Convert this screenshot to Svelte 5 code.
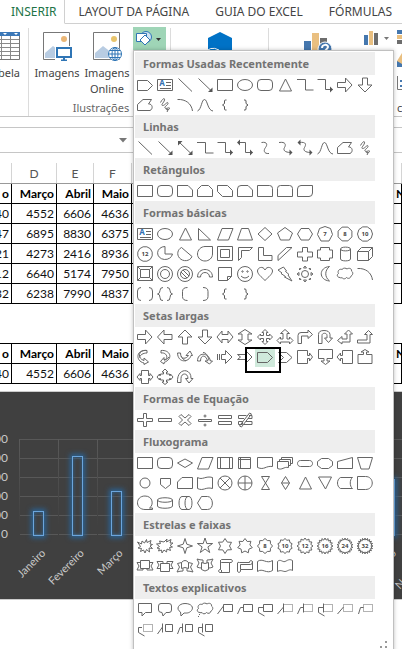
<script lang="ts">
  type Icon = { d: string; dash?: string; fill?: string; text?: string; thick?: boolean };

  const ell = (cx: number, cy: number, rx: number, ry = rx) =>
    `M${cx - rx} ${cy}a${rx} ${ry} 0 1 0 ${rx * 2} 0a${rx} ${ry} 0 1 0 ${-rx * 2} 0z`;

  function star(n: number, outer: number, inner: number) {
    const pts: string[] = [];
    for (let i = 0; i < n * 2; i++) {
      const r = i % 2 ? inner : outer;
      const a = (Math.PI * i) / n - Math.PI / 2;
      pts.push(`${(10 + r * Math.cos(a)).toFixed(1)} ${(10 + r * Math.sin(a)).toFixed(1)}`);
    }
    return `M${pts.join('L')}z`;
  }

  function polygon(n: number, r = 7.5) {
    const pts: string[] = [];
    for (let i = 0; i < n; i++) {
      const a = (Math.PI * (2 * i + 1)) / n - Math.PI / 2;
      pts.push(`${(10 + r * Math.cos(a)).toFixed(1)} ${(10 + r * Math.sin(a)).toFixed(1)}`);
    }
    return `M${pts.join('L')}z`;
  }

  const cloud =
    'M5 13.5c-3 0-3.5-3-1.5-4C2 6.5 5 4.5 7 5.5 8.500 3.500 11 4 12 5c2-1.500 5-.5 4.500 2 2 1.500 1.500 4-.5 5-.5 2.500-3 3-4.500 1.500-1.500 2-4 1.500-4.500 0-.5.5-1.500.5-2 0z';

  const icons: Record<string, Icon> = {
    // lines
    line: { d: 'M3.5 3.5l13.5 13' },
    arrowLine: { d: 'M3.5 3.5l13.5 13', fill: 'M17.5 17v-4.5l-4.5 4.5z' },
    doubleLine: { d: 'M3.5 3.5l13.5 13', fill: 'M17.5 17v-4.5l-4.5 4.5zM3 3v4.5l4.5-4.5z' },
    elbow: { d: 'M2 4.5h8.5v10.5h8' },
    elbowArrow: { d: 'M2.5 4.5h8v10h7', fill: 'M18 14.5l-3-3v6z' },
    elbowDouble: { d: 'M3 4.5h7.5v10h7', fill: 'M18 14.5l-3-3v6zM2 4.5l3-3v6z' },
    curved: { d: 'M6.5 4.5c6-1 6 2.5 4 5s-2 6.500 3.500 6' },
    curvedArrow: { d: 'M4 4.5c7-1 7 2.5 5.5 5s0 5 6.5 5', fill: 'M17.5 14.5l-3-3v6z' },
    curvedDouble: { d: 'M4 4.5c8-1 7 2.5 5.5 5s0 5 6.5 5', fill: 'M17.5 14.5l-3-3v6zM2.5 4.5l3-3v6z' },
    curve: { d: 'M2.5 16c4-1.5 4-11.5 7-11.5s3 11 8.5 11.5' },
    freeform: { d: 'M2.5 15.5v-6l5.5-5h8.5l-3 4.5c4-.5 5 5 1.5 6.5z' },
    scribble: { d: 'M5.5 7.5c2-4 4.5-5 4-2.5s-4 5-2 5.5 5-4.5 5.5-2.5-4 3.5-3 5 5-1.5 4.5.5-4 1.5-3 .5 2 1 .5 3' },
    arc: { d: 'M2.5 4.5c8-.5 14 4 15 11.5' },

    // rectangles
    rect: { d: 'M2.5 4.5h15v11h-15z' },
    roundRect: { d: 'M6 4.5h8a3.5 3.5 0 0 1 3.5 3.5v4a3.5 3.5 0 0 1-3.5 3.5h-8a3.5 3.5 0 0 1-3.5-3.5v-4a3.5 3.5 0 0 1 3.5-3.5z' },
    snip1: { d: 'M2.5 4.5h10.5l4.5 4.5v6.5h-15z' },
    snip2: { d: 'M6.5 4.5h7l4 4v7h-15v-7z' },
    snipDiag: { d: 'M2.5 4.5h10l5 5v6h-10l-5-5z' },
    snipRound: { d: 'M6 4.5h7l4.5 4.5v6.5h-15v-7.5q0-3.5 3.5-3.5z' },
    round1: { d: 'M2.5 4.5h12q3 0 3 3v8h-15z' },
    round2: { d: 'M5.5 4.5h9q3 0 3 3v8h-15v-8q0-3 3-3z' },
    roundDiag: { d: 'M6 4.5h11.5v7.5q0 3.5-3.5 3.5h-11.5v-7.5q0-3.5 3.5-3.5z' },

    // basic shapes
    textBox: { d: 'M2.5 4.5h15v11h-15zM11 7.5h5M11 10.5h5M5 13.5h11', text: 'A' },
    oval: { d: ell(10, 10, 7.5, 5.5) },
    triangle: { d: 'M10.5 4l6 12h-12z' },
    rightTriangle: { d: 'M3.5 4.5v11.5h12z' },
    parallelogram: { d: 'M7 4.5h11l-4.5 11.5h-11z' },
    trapezoid: { d: 'M6.5 4.5h7l4 11.5h-15z' },
    diamond: { d: 'M10 3.5l7 6.5-7 6.5-7-6.5z' },
    pentagon: { d: 'M10 3.5l7.5 5.5-3 7h-9l-3-7z' },
    hexagon: { d: 'M6 4.5h8l3.5 5.5-3.5 6h-8l-3.5-6z' },
    heptagon: { d: 'M10 2.5l5.5 2 2 6-3.5 6.5h-8l-3.5-6.5 2-6z', text: '7' },
    octagon: { d: polygon(8), text: '8' },
    decagon: { d: polygon(10), text: '10' },
    dodecagon: { d: polygon(12), text: '12' },
    pie: { d: 'M10 2.5v7.5h7.5a7.500 6.500 0 1 1-7.5-7.5z' },
    chord: { d: 'M6.5 3.5l10.5 9c-2 5-9 5.5-12.5 1.5-3-3.5-2-8.5 2-10.5z' },
    teardrop: { d: 'M17.5 2.5v7.5c0 4-3.5 7-7.5 7s-7.5-3-7.5-7 3.5-7.5 7.5-7.5z' },
    frame: { d: 'M2.5 2.5h15v14h-15zM5.5 5.5h9v8h-9z' },
    halfFrame: { d: 'M3.5 3.5h14l-3 3h-8v7l-3 3z' },
    lShape: { d: 'M3.5 3.5h5v8h8.5v5h-13.5z' },
    stripe: { d: 'M11.5 3.5h5.5l-14 13v-5z' },
    cross: { d: 'M7.5 3.5h5v4.5h5v5h-5v4h-5v-4h-5v-5h5z' },
    plaque: { d: 'M5.5 3.5h9v2.5h3v8h-3v2.5h-9v-2.5h-3v-8h3z' },
    can: { d: 'M5.5 5v10c0 2.5 10 2.5 10 0v-10c0-2.5-10-2.5-10 0zc0 2.5 10 2.5 10 0' },
    cube: { d: 'M2.5 7.5l4-4h11v9l-4 4h-11zh11l4-4M13.5 7.5v9' },
    bevel: { d: 'M2.5 2.5h15v14h-15zM5.5 5.5h9v8h-9zM2.5 2.5l3 3M17.5 2.5l-3 3M2.5 16.5l3-3M17.5 16.5l-3-3' },
    donut: { d: ell(10, 10, 7.5) + ell(10, 10, 4.5) },
    noSymbol: { d: ell(10, 10, 7.5) + ell(10, 10, 4.5) + 'M6 8l6 6M8 6l6 6' },
    blockArc: { d: 'M2.5 13c0-10 15-10 15 0h-3c0-6-9-6-9 0z' },
    folded: { d: 'M3.5 3.5h13v9l-4 4h-9zM16.5 12.5h-4v4' },
    smiley: { d: ell(10, 10, 7.5) + ell(7.5, 7.5, 0.7) + ell(12.5, 7.5, 0.7) + 'M6 12q4 4 8 0' },
    heart: { d: 'M10 6c2-4.5 7.5-2.5 7.5 1 0 3-4 6-7.5 9.5-3.5-3.5-7.5-6.5-7.5-9.5 0-3.5 5.5-5.5 7.5-1z' },
    bolt: { d: 'M3 6l5.5-3 3 4-1 .5 3.5 3-1 .5 4 6-7.5-4 1-.5-4.5-3 1-.5z' },
    sun: { d: ell(10, 10, 3.5) + 'M10 2l1.5 2h-3zM10 18l1.5-2h-3zM2 10l2-1.5v3zM18 10l-2-1.5v3zM4.5 4.5l1.500 0-1.500 1.500zM15.5 4.5h-1.5l1.5 1.5zM4.5 15.5h1.5l-1.5-1.5zM15.5 15.5h-1.5l1.5-1.5z' },
    moon: { d: 'M14.5 2.5c-11 1-11 13.5 0 14.5-5-4-5-10.5 0-14.5z' },
    cloud: { d: cloud },
    brackets: { d: 'M6 3.5q-3.5 0-3.5 3.5v6q0 3.5 3.5 3.5M14 3.5q3.5 0 3.5 3.5v6q0 3.5-3.5 3.5' },
    braces: { d: 'M8 3.5q-3 0-3 3t-2.5 3.5q2.5 0 2.5 3.5t3 3M12 3.5q3 0 3 3t2.5 3.5q-2.5 0-2.5 3.5t-3 3' },
    leftBracket: { d: 'M12.5 3.5q-5 0-5 4v5q0 4 5 4' },
    rightBracket: { d: 'M8 3.5q5 0 5 4v5q0 4-5 4' },
    leftBrace: { d: 'M11.5 5h-1q-1 0-1 1v2.500l-2 1.500 2 1.500v2.500q0 1 1 1h1', thick: true },
    rightBrace: { d: 'M9 5h1q1 0 1 1v2.500l2 1.500-2 1.500v2.500q0 1-1 1h-1', thick: true },

    // block arrows
    right: { d: 'M2.5 7.5h8v-4.5l6.5 7-6.5 7v-4.5h-8z' },
    left: { d: 'M17 7.5h-8v-4.5l-6.5 7 6.5 7v-4.5h8z' },
    up: { d: 'M7.5 17v-7h-4.5l7-7 7 7h-4.5v7z' },
    down: { d: 'M7.5 3v7h-4.5l7 7 7-7h-4.5v-7z' },
    leftRight: { d: 'M2 10l5-6v3.5h6v-3.5l5 6-5 6v-3.5h-6v3.5z' },
    upDown: { d: 'M10 2.5l7 4.5h-4v6h4l-7 4.5-7-4.5h4v-6h-4z' },
    quad: { d: 'M10 2.5l3 3h-1.5v3h3v-1.5l3 3-3 3v-1.5h-3v3h1.5l-3 3-3-3h1.5v-3h-3v1.5l-3-3 3-3v1.5h3v-3h-1.5z' },
    triple: { d: 'M10 2.5l4.5 4h-2.5v5.5h2.5v-2l3.5 3.5-3.5 3.5v-2h-9v2l-3.5-3.5 3.5-3.5v2h2.5v-5.5h-2.5z' },
    bent: { d: 'M3 16.5v-8q0-3 3-3h7v-2.5l4.5 4.5-4.5 4v-2.5h-6.5v7.5z' },
    uTurn: { d: 'M3.5 16.5v-9q0-4 5.5-4t6 4v3.5h2.5l-4 4.5-4-4.5h2.500v-2.500c0-3-5-3-5 0v8z' },
    leftUp: { d: 'M13.5 3l4 4h-2.5v8h-8v2l-4.5-3.5 4.5-4v2.5h5v-5h-2.5z' },
    bentUp: { d: 'M13.5 3.5l4 4h-2.5v8.5h-12.5v-3h9.5v-5.5h-2.5z' },
    curvedRight: { d: 'M12 3.5c-9-1-10 8-3 10v-2.5l4.500 4-4.500 2.500v-1.500c-9-2-8-14 3-12.500zM12 3.500v2.500c-4 0-7 2-7.500 4.500' },
    curvedLeft: { d: 'M6 3.5c9-1 13 8 3 12v1.5l-3.5-2.5 3.500-4v2.500c5-1 3-8-3-7zM14 10c-1.500 2-3 3-5 3' },
    curvedUp: { d: 'M2.5 6h3c0 7 6 6 8 2.5h-2.5l4-4.5 2.5 4.5h-1.5c-2 7-13 8-13.5-2.5zM6 9c1 2.5 3 4 5 5' },
    curvedDown: { d: 'M2.5 14h3c0-7 6-6 7 0h-2.5l4.5 3 3-3h-2c-2-9-13-9-13 0zM8 5.5c3 0 5 3 6 8' },
    striped: { d: 'M2.5 7v6M4.5 7v6M6.5 7.5h4v-4l6.5 6.5-6.5 6.5v-4h-4z' },
    notched: { d: 'M2.5 7.5h8v-4l6.5 6.5-6.5 6.5v-4h-8l3-2.5z' },
    homePlate: { d: 'M2.5 5.5h10l5 5-5 5h-10z' },
    chevron: { d: 'M3.5 5.5h8l5.5 5-5.5 5h-8l5-5z' },
    rightCallout: { d: 'M2.5 3.5h10v5h2v-2.5l3 4-3 4v-2.5h-2v5h-10z' },
    downCallout: { d: 'M3.5 2.5h14v9h-5.5v2.5h3l-4.5 3.5-4.5-3.5h3v-2.5h-5.5z' },
    leftCallout: { d: 'M17.5 3.5h-10v5h-2v-2.5l-3.5 4 3.5 4v-2.5h2v5h10z' },
    upCallout: { d: 'M3 16.5h14v-9h-5.5v-2.5h2.5l-4-2.5-4 2.5h2.5v2.5h-5.5z' },
    sideCallout: { d: 'M6.5 3.5h7v5h1.5v-2l3 3.5-3 3.5v-2h-1.5v5h-7v-5h-1.5v2l-3-3.5 3-3.5v2h1.5z' },
    quadCallout: { d: 'M10 2l3 3h-1.5v2h3v1.5h1v-1.500l2.500 3-2.500 3v-1.500h-1v1.500h-3v2h1.500l-3 2.500-3-2.500h1.500v-2h-3v-1.500h-1v1.500l-2.500-3 2.500-3v1.500h1v-1.500h3v-2h-1.500z' },
    circular: { d: 'M2.5 15.5c-1-15 14-15 13.5-4h2l-4 4.5-3.5-4.5h2.5c0-6-7-6-7 0v4z' },

    // equation shapes
    plus: { d: 'M8.5 3.5h3v5h6v3h-6v5h-3v-5h-6v-3h6z' },
    minus: { d: 'M3.5 8.5h13v3h-13z' },
    times: { d: 'M6 4.5l4 3.5 4-3.5 2 2-3.5 3.5 3.5 3.5-2 2-4-3.5-4 3.5-2-2 3.5-3.5-3.5-3.5z' },
    divide: { d: 'M3.5 9.5h13v2h-13z' + ell(10, 6, 1) + ell(10, 15, 1) },
    equal: { d: 'M3.5 5.5h13v3h-13zM3.5 11.5h13v3h-13z' },
    notEqual: { d: 'M3.5 5.5h8M14 5.5h3v3h-4M9 8.5h-5.5v-3M3.5 11.5h4v3h-4zM11 11.5h6v3h-8M14.5 3l2 1-10 13-2-1z' },

    // flowchart
    decision: { d: 'M10 6l7.5 4-7.5 4.5-7.5-4.5z' },
    predefined: { d: 'M2.5 4.5h15v11h-15zM5.5 4.5v11M14.5 4.5v11' },
    internal: { d: 'M3.5 4.5h12v11h-12zM5.5 4.5v11M3.5 6.5h12' },
    document: { d: 'M2.5 4.5h15v9c-7-1-8 4-15 1z' },
    documents: { d: 'M2.5 8.5h11v6c-5-1-6 3-11 1zM4.5 8.5v-2h11v6h-2M6.5 6.5v-2h11v6h-2' },
    terminator: { d: 'M5.5 7.5h9c4 0 4 6 0 6h-9c-4 0-4-6 0-6z' },
    preparation: { d: 'M6.5 5.5h7l4 3v4l-4 3h-7l-4-3v-4z' },
    manualInput: { d: 'M2.5 8.5l15-4v11h-15z' },
    manualOp: { d: 'M2.5 4.5h15l-3.5 11.5h-8z' },
    connector: { d: ell(10, 10, 5) },
    offPage: { d: 'M5.5 5.5h10v6l-5 4-5-4z' },
    card: { d: 'M7 4.5h10.5v11h-15v-6.5z' },
    tape: { d: 'M2.5 4.5c5 3 8-2 15 0v11c-7-2-9 3-15 0z' },
    summing: { d: ell(10, 10, 7) + 'M5 5l10 10M15 5l-10 10' },
    or: { d: ell(10, 10, 7) + 'M10 3v14M3 10h14' },
    collate: { d: 'M6.5 3.5h8l-8 13h8z' },
    sort: { d: 'M10.5 3.5l4 6.5-4 6.5-4-6.5zM6.5 10h8' },
    merge: { d: 'M3.5 4h13l-6 12z' },
    stored: { d: 'M5.5 4.5h12c-3 2-3 9 0 11h-12c-4-2-4-9 0-11z' },
    delay: { d: 'M2.5 3.5h8c9 0 9 13 0 13h-8z' },
    sequential: { d: 'M17.5 16.5h-7.5c-10 0-10-13.5 0-13.5 8 0 9 9 4.5 12h3z' },
    disk: { d: 'M2.5 7v6c0 3 15 3 15 0v-6c0-3-15-3-15 0zc0 3 15 3 15 0' },
    direct: { d: 'M7 3.5h7c4 0 4 13 0 13h-7c-4 0-4-13 0-13zM13 3.5c-4 0-4 13 0 13' },
    display: { d: 'M6.5 3.5h6c6 0 7 13 0 13h-6l-4-6.5z' },

    // stars and banners
    burst1: { d: 'M9.5 7l2-3.5.5 3 4-2-1 3.5 2.5.5-2.5 1.5 2.5 2.5-3.5-.5.5 4-3-2.5-1.5 3.5-1.5-3-3 1.5 1-3-3.5-.5 2.500-1.500-3-4.500 4 2 .5-3z' },
    burst2: { d: 'M9 6l3-3-.5 3 4.5-2.5-1 3.5 3 0-3 2.5 2.500 1.500-3 .5 1 3-3.500-1.500-.5 3-2.500-2-2 3-.5-3-3 1 1-2.500-2.500-.5 2.500-1.500-3-2.500 4-.5-1-2.500z' },
    star4: { d: star(4, 7.5, 2.5) },
    star5: { d: star(5, 8, 3) },
    star6: { d: star(6, 7.5, 4.5) },
    star7: { d: star(7, 7.5, 5) },
    star8: { d: star(8, 7.5, 6), text: '8' },
    star10: { d: star(10, 7.5, 6), text: '10' },
    star12: { d: star(12, 8, 6), text: '12' },
    star16: { d: star(16, 8, 6), text: '16' },
    star24: { d: star(18, 8, 6), text: '24' },
    star32: { d: star(20, 8, 6), text: '32' },
    ribbonUp: { d: 'M5.5 4.5h9v8h-9zM5.5 6.5h-3.5l2 3.5-2 4h6v-1.5M14.5 6.5h3.5l-2 3.5 2 4h-6v-1.5' },
    ribbonDown: { d: 'M5.5 7.5h9v8h-9zM8 7.5v-2h-6l2 3.5-2 3.5h3.5M12 7.5v-2h6l-2 3.5 2 3.5h-3.5' },
    bannerUp: { d: 'M6.5 12.5v-6q3.5-4 7 0v6q-3.5-2-7 0zM6.5 6.5l-4 1 2 3.5-2.5 5q3-1 6-1v-2.5M13.5 6.5l4 1-2 3.5 2.5 5q-3-1-6-1v-2.5' },
    bannerDown: { d: 'M6.5 6.5v7q3.5 3 7 0v-7q-3.5 2-7 0zM8 7v-3q-3 0-6-1l2 4-2 4q2 1 4.5 1M12 7v-3q3 0 6-1l-2 4 2 4q-2 1-4.5 1' },
    scrollV: { d: 'M6.5 3.5h10q2 1.5 0 3h-2v10h-10q-2-1.5 0-3h1v-8M6.5 3.5q-3 1.5 0 3h8M5.5 13.5q3 1.5 0 3' },
    scrollH: { d: 'M2.5 7v8.5q1.5 2 3 0v-2h12v-8q-1.5-2-3 0v1h-10q-2-1-2 1zM5.5 13.5v-5h10q2 0 2-3' },
    wave: { d: 'M2.5 5.5c5-4 9 3 15-1v10c-6 4-10-3-15 1z' },
    doubleWave: { d: 'M2.5 5.5c3-3 5 1 7.5 0s4-3 7.5-1v10c-3-2-5 1-7.5 1s-4-2-7.5 0z' },

    // callouts
    rectCallout: { d: 'M3.5 4.5h13v9h-6l-3.5 3.5v-3.5h-3.5z' },
    roundCallout: { d: 'M6 4.5h8q2.5 0 2.5 2.5v4q0 2.5-2.5 2.5h-3l-3 3.5-1-3.5q-3.5 0-3.5-2.5v-4q0-2.5 2.5-2.5z' },
    ovalCallout: { d: 'M6 17l-.5-4c-5-3-2-8.5 4.5-8.5s9 4 6.5 7-5 2.5-7.5 2.5z' },
    cloudCallout: { d: cloud + 'M4 15.5h1M3 17.5h1' },
    line1: { d: 'M8.5 5.5h9v7h-9zM8.5 7l-6 8' },
    line2: { d: 'M8.5 5.5h9v7h-9zM8.5 8.5h-3l-3 6.5' },
    line3: { d: 'M8.5 5.5h9v7h-9zM8.5 8.5h-5v5l6 3.5' },
    accent1: { d: 'M8.5 4.5v9M8.5 8l-6 7', dash: 'M8.5 5.5h9v7h-9z' },
    accent2: { d: 'M8.5 4.5v9M8.5 8.5h-3l-3 6.5', dash: 'M8.5 5.5h9v7h-9z' },
    accent3: { d: 'M8.5 4.5v9M8.5 8.5h-5v5l6 3.5', dash: 'M8.5 5.5h9v7h-9z' },
    plain1: { d: 'M8.5 8l-6 7', dash: 'M8.5 5.5h9v7h-9z' },
    plain2: { d: 'M8.5 8.5h-3l-2 6.5', dash: 'M8.5 5.5h9v7h-9z' },
    plain3: { d: 'M7 8.5h-3.5v5l6 3.5', dash: 'M8.5 5.5h9v7h-9z' },
    border1: { d: 'M10.5 5.5h7v7h-7zM7.5 4.5v9M7.5 8l-5 7' },
    border2: { d: 'M10.5 5.5h7v7h-7zM7.5 4.5v9M7.5 8.5h-2.5l-2.5 6.5' },
    border3: { d: 'M10.5 5.5h7v7h-7zM7.5 4.5v9M7.5 8.5h-4v5l6 3.5' }
  };

  const sections = [
    {
      title: 'Formas Usadas Recentemente',
      shapes: 'homePlate textBox line arrowLine rect oval roundRect triangle elbow elbowArrow right down freeform scribble arc curve leftBrace rightBrace'
    },
    {
      title: 'Linhas',
      shapes: 'line arrowLine doubleLine elbow elbowArrow elbowDouble curved curvedArrow curvedDouble curve freeform scribble'
    },
    { title: 'Retângulos', shapes: 'rect roundRect snip1 snip2 snipDiag snipRound round1 round2 roundDiag' },
    {
      title: 'Formas básicas',
      shapes:
        'textBox oval triangle rightTriangle parallelogram trapezoid diamond pentagon hexagon heptagon octagon decagon ' +
        'dodecagon pie chord teardrop frame halfFrame lShape stripe cross plaque can cube ' +
        'bevel donut noSymbol blockArc folded smiley heart bolt sun moon cloud arc ' +
        'brackets braces leftBracket rightBracket leftBrace rightBrace'
    },
    {
      title: 'Setas largas',
      selected: 'homePlate',
      shapes:
        'right left up down leftRight upDown quad triple bent uTurn leftUp bentUp ' +
        'curvedRight curvedLeft curvedUp curvedDown striped notched homePlate chevron rightCallout downCallout leftCallout upCallout ' +
        'sideCallout quadCallout circular'
    },
    { title: 'Formas de Equação', shapes: 'plus minus times divide equal notEqual' },
    {
      title: 'Fluxograma',
      shapes:
        'rect roundRect decision parallelogram predefined internal document documents terminator preparation manualInput manualOp ' +
        'connector offPage card tape summing or collate sort triangle merge stored delay ' +
        'sequential disk direct display'
    },
    {
      title: 'Estrelas e faixas',
      shapes:
        'burst1 burst2 star4 star5 star6 star7 star8 star10 star12 star16 star24 star32 ' +
        'ribbonUp ribbonDown bannerUp bannerDown scrollV scrollH wave doubleWave'
    },
    {
      title: 'Textos explicativos',
      shapes:
        'rectCallout roundCallout ovalCallout cloudCallout line1 line2 line3 accent1 accent2 accent3 plain1 plain2 ' +
        'plain3 border1 border2 border3'
    }
  ];

  const tabs = ['INSERIR', 'LAYOUT DA PÁGINA', 'GUIA DO EXCEL', 'FÓRMULAS'];

  const rows = [
    ['40', '4552', '6606', '4636'],
    ['47', '6895', '8830', '6375'],
    ['21', '4273', '2416', '8936'],
    ['12', '6640', '5174', '7950'],
    ['32', '6238', '7990', '4837']
  ];

  const ticks = ['00', '00', '00', '00', '00', '0'];
  const months = [
    { name: 'Janeiro', bar: 25 },
    { name: 'Fevereiro', bar: 80 },
    { name: 'Março', bar: 45 },
    { name: 'Abril', bar: 66 },
    { name: 'Maio', bar: 46 },
    { name: 'Junho', bar: 50 },
    { name: 'Julho', bar: 40 },
    { name: 'Agosto', bar: 60 },
    { name: 'Setembro', bar: 35 },
    { name: 'Outubro', bar: 57 },
    { name: 'Novembro', bar: 50 }
  ];
</script>

<div class="excel">
  <nav class="tabs">
    {#each tabs as tab, i}
      <button class="tab" class:active={i === 0}>{tab}</button>
    {/each}
  </nav>

  <div class="ribbon">
    <div class="group tables">
      <button class="big">
        <svg width="28" height="30" viewBox="0 0 28 30">
          <path d="M0 1.5h27.5v27H0" fill="#fff" stroke="#777" />
          <path d="M0 1h28v4H0z" fill="#3b78b8" />
          <path d="M11 2h4l-2 2zM22 2h4l-2 2z" fill="#fff" />
          <path d="M0 8.5h27M0 12.5h27M0 16.5h27M0 20.5h27M0 24.5h27M9.5 5v23M18.5 5v23" stroke="#8a8a8a" />
        </svg>
        <span>Tabela</span>
      </button>
    </div>

    <div class="group pictures">
      <div class="buttons">
        <button class="big">
          <svg width="30" height="30" viewBox="0 0 30 30">
            <path d="M1.5 1.5h26v27h-26z" fill="#fff" stroke="#777" />
            <circle cx="22" cy="8" r="3" fill="#eab676" />
            <path d="M3 27v-5l8-7 9 7v5z" fill="#b8cce2" />
            <path d="M13 15h17v15h-17z" fill="#fff" />
            <path d="M15 17h14v9h-14z" fill="#fff" stroke="#2f75b5" stroke-width="2" />
            <path d="M22 26v3M19 29.5h6" stroke="#2f75b5" stroke-width="2" />
          </svg>
          <span>Imagens</span>
        </button>
        <button class="big">
          <svg width="30" height="30" viewBox="0 0 30 30">
            <path d="M1.5 1.5h26v27h-26z" fill="#fff" stroke="#777" />
            <circle cx="22" cy="8" r="3" fill="#e8c46c" />
            <path d="M3 27v-5l8-7 9 7v5z" fill="#b8cce2" />
            <circle cx="23" cy="23" r="7" fill="#fff" />
            <path d={ell(23, 23, 6.5) + ell(23, 23, 3, 6.5) + 'M16.5 23h13M23 16.5v13M18 19.5h10M18 26.5h10'} fill="none" stroke="#2f75b5" />
          </svg>
          <span>Imagens Online</span>
        </button>
        <button class="shapes-button" aria-label="Formas">
          <svg width="32" height="22" viewBox="0 0 32 22">
            <circle cx="13" cy="9" r="5.5" fill="#cfe3f3" stroke="#2f75b5" />
            <path d="M3.5 5.5h10v8h-10z" fill="#fff" stroke="#2f75b5" />
            <path d="M12 7l5 5-5 5-5-5z" fill="#fff" stroke="#2f75b5" />
            <path d="M23 10h5l-2.5 3z" fill="#333" />
          </svg>
        </button>
      </div>
      <span class="caption">Ilustrações</span>
    </div>

    <div class="group apps">
      <svg width="28" height="28" viewBox="0 0 28 28">
        <path d="M14 4l12 6v13l-12 6-12-6v-13z" fill="#0072c6" />
        <path d="M-2 26q6-9 15-4l4 6z" fill="#0072c6" stroke="#fff" />
      </svg>
    </div>

    <div class="group charts">
      <svg width="30" height="30" viewBox="0 0 30 30">
        <path d="M2 13h7v17h-7z" fill="#4577ae" />
        <path d="M10 5h7v25h-7z" fill="#e9bf80" />
        <path d="M18 10h7v20h-7z" fill="#6d6d6d" />
        <circle cx="23" cy="21" r="7" fill="#4577ae" stroke="#fff" />
        <path d="M20 20c0-4 6-4 6-1 0 2-3 2-3 5" fill="none" stroke="#fff" stroke-width="2" />
      </svg>
      <svg class="column-chart" width="27" height="16" viewBox="0 0 27 16">
        <path d="M0 5h4v10h-4z" fill="#4577ae" />
        <path d="M5 1h4v14h-4z" fill="#e9bf80" />
        <path d="M10 3h4v12h-4z" fill="#6d6d6d" />
        <path d="M20 7h5l-2.5 3z" fill="#777" />
      </svg>
      <div class="more">
        <svg width="14" height="64" viewBox="0 0 14 64">
          <path d="M0 2h14v4H0z" fill="#4577ae" />
          <path d="M0 7h10v4H0z" fill="#e9bf80" />
          <path d="M0 12h14v4H0z" fill="#6d6d6d" />
          <path d="M0 33l5-8 5 4 4-4v14H0z" fill="#e9bf80" />
          <path d="M0 33l5 3 9-4v7H0z" fill="#4577ae" />
          <path d="M.5 48v13.5h13" fill="none" stroke="#777" />
          <path d="M3 52h2v2H3zM3 57h2v2H3z" fill="#4577ae" />
        </svg>
        <span>co</span>
      </div>
    </div>
  </div>

  <div class="formula-bar">
    <svg width="8" height="5" viewBox="0 0 8 5"><path d="M0 0h8l-4 4.5z" fill="#777" /></svg>
  </div>

  <div class="sheet">
    <table>
      <colgroup><col class="c" /><col class="d" /><col class="e" /><col class="f" /><col /><col class="n" /></colgroup>
      <thead>
        <tr><th></th><th>D</th><th>E</th><th>F</th><th></th><th></th></tr>
      </thead>
      <tbody>
        <tr class="names"><th>o</th><th>Março</th><th>Abril</th><th>Maio</th><td></td><th>N</th></tr>
        {#each rows as row}
          <tr>{#each row as value}<td>{value}</td>{/each}<td></td><td></td></tr>
        {/each}
        <tr class="blank"><td colspan="6"></td></tr>
        <tr class="names"><th>o</th><th>Março</th><th>Abril</th><th>Maio</th><td></td><th>N</th></tr>
        <tr>{#each rows[0] as value}<td>{value}</td>{/each}<td></td><td></td></tr>
      </tbody>
    </table>
  </div>

  <div class="chart">
    <div class="axis">
      {#each ticks as tick}<span>{tick}</span>{/each}
    </div>
    <div class="plot">
      {#each months as month}
        <div class="month">
          <div class="track"><div class="bar" style="height: {month.bar}px"></div></div>
          <span class="month-name">{month.name}</span>
        </div>
      {/each}
    </div>
  </div>

  <div class="menu">
    {#each sections as section}
      <h2>{section.title}</h2>
      <div class="shapes">
        {#each section.shapes.split(' ') as name}
          {@const icon = icons[name]}
          <button class="shape" class:selected={section.selected === name} aria-label={name}>
            <svg width="20" height="20" viewBox="0 0 20 20">
              <path class="stroke" class:thick={icon.thick} d={icon.d} />
              {#if icon.dash}<path class="stroke dash" d={icon.dash} />{/if}
              {#if icon.fill}<path class="solid" d={icon.fill} />{/if}
              {#if icon.text === 'A'}
                <text class="letter" x="7" y="11">A</text>
              {:else if icon.text}
                <text x="10" y="12">{icon.text}</text>
              {/if}
            </svg>
          </button>
        {/each}
      </div>
    {/each}
    <svg class="grip" width="8" height="8" viewBox="0 0 8 8">
      <path d="M5 0h2v2H5zM0 5h2v2H0zM5 5h2v2H5z" fill="#999" />
    </svg>
  </div>
</div>

<style>
  :global(body) {
    margin: 0;
    overflow: hidden;
  }

  .excel {
    position: relative;
    min-height: 100vh;
    overflow: hidden;
    background: #fff;
    color: #444;
    font-family: 'Noto Sans', 'Open Sans', sans-serif;
    font-size: 11px;
  }

  button {
    padding: 0;
    border: none;
    background: none;
    color: inherit;
    font: inherit;
    cursor: pointer;
  }

  svg {
    display: block;
    flex: none;
  }

  .tabs {
    display: flex;
    height: 24px;
  }

  .tab {
    flex: none;
    padding: 0 13px;
    border-bottom: 1px solid #d0d0d0;
    font-size: 12px;
    line-height: 22px;
    white-space: nowrap;
  }

  .tab:last-child {
    flex: 1 0 auto;
    padding-right: 0;
    text-align: left;
  }

  .tab.active {
    padding: 0 8px 0 11px;
    border-right: 1px solid #d0d0d0;
    border-bottom-color: #fff;
    color: #217346;
  }

  .ribbon {
    display: flex;
    height: 92px;
    border-bottom: 1px solid #c6c6c6;
  }

  .group {
    display: flex;
    flex: none;
    box-sizing: border-box;
    margin: 4px 0 0;
    border-right: 1px solid #dcdcdc;
  }

  .tables {
    justify-content: flex-end;
    width: 29px;
    padding-right: 8px;
  }

  .pictures {
    flex-direction: column;
    justify-content: space-between;
    width: 142px;
    padding-left: 3px;
  }

  .buttons {
    display: flex;
    align-items: flex-start;
  }

  .big {
    display: flex;
    flex: none;
    flex-direction: column;
    align-items: center;
    gap: 4px;
    width: 50px;
    padding-top: 3px;
    line-height: 16px;
  }

  .tables .big {
    align-items: flex-end;
  }

  .shapes-button {
    width: 33px;
    height: 24px;
    margin-left: 1px;
    margin-top: -1px;
    background: #9fd5b7;
  }

  .caption {
    color: #666;
    line-height: 16px;
    text-align: center;
  }

  .apps {
    justify-content: center;
    width: 98px;
  }

  .charts {
    flex: 1 0 auto;
    gap: 32px;
    padding-left: 33px;
    border-right: none;
  }

  .column-chart {
    margin-top: 2px;
  }

  .more {
    display: flex;
    flex-direction: column;
    justify-content: space-between;
    margin-left: -26px;
    line-height: 16px;
  }

  .formula-bar {
    display: flex;
    align-items: center;
    height: 24px;
    margin-top: 10px;
    padding-left: 119px;
    border-top: 1px solid #c6c6c6;
    border-bottom: 1px solid #c6c6c6;
  }

  .sheet {
    padding-top: 10px;
  }

  table {
    width: calc(100% + 50px);
    margin-left: -50px;
    border-collapse: collapse;
    table-layout: fixed;
    color: #111;
    font-family: Lato, 'Liberation Sans', sans-serif;
    font-size: 12px;
  }

  .c {
    width: 61px;
  }

  .d {
    width: 45px;
  }

  .e {
    width: 37px;
  }

  .f {
    width: 38px;
  }

  .n {
    width: 8px;
  }

  th,
  td {
    height: 20px;
    box-sizing: border-box;
    padding: 0 2px;
    border: 1px solid #000;
    line-height: 18px;
    text-align: right;
    white-space: nowrap;
  }

  thead th {
    padding: 0;
    border-color: transparent #d4d4d4 #999;
    color: #555;
    font-weight: 400;
    text-align: center;
  }

  tbody th {
    color: #000;
  }

  th:last-child {
    border-left: none;
    text-align: left;
  }

  .blank td {
    height: 40px;
    border-right: none;
    border-left: none;
  }

  .chart {
    display: flex;
    height: 209px;
    margin-top: 7px;
    box-sizing: border-box;
    overflow: hidden;
    border-top: 1px solid #ccc;
    border-bottom: 1px solid #ccc;
    background: #404040;
    color: #c8c8c8;
    font-family: Lato, 'Liberation Sans', sans-serif;
    font-size: 12px;
  }

  .axis {
    display: flex;
    flex: none;
    flex-direction: column;
    align-items: flex-end;
    width: 8px;
    margin-right: 11px;
    padding-top: 37px;
    line-height: 19px;
  }

  .plot {
    display: flex;
    flex: none;
    padding-top: 47px;
    font-size: 11px;
  }

  .month {
    width: 39px;
  }

  .track {
    display: flex;
    align-items: flex-end;
    justify-content: center;
    height: 97px;
    background:
      linear-gradient(#5a5a5a, #404040 90%) left / 1px 100% no-repeat,
      repeating-linear-gradient(#585858 0 1px, transparent 1px 19px);
  }

  .bar {
    width: 11px;
    box-sizing: border-box;
    border: 1px solid #6ba5dc;
    box-shadow:
      0 0 5px 2px #2a6294,
      inset 0 0 4px #2a6294;
  }

  .month-name {
    display: block;
    float: right;
    margin-top: 10px;
    margin-right: 20px;
    line-height: 14px;
    transform: rotate(-45deg);
    transform-origin: top right;
  }

  .menu {
    position: absolute;
    top: 50px;
    left: 133px;
    box-sizing: border-box;
    width: 261px;
    padding: 1px 0 8px 1px;
    border: 1px solid #c0c0c0;
    background: #fff;
    box-shadow: 0 0 4px rgba(0, 0, 0, 0.25);
  }

  h2 {
    width: 232px;
    margin: 0;
    padding-left: 8px;
    background: #eee;
    color: #737373;
    font-size: 11px;
    font-weight: 700;
    line-height: 23px;
  }

  .shapes {
    display: grid;
    grid-template-columns: repeat(12, 20px);
  }

  .shape {
    position: relative;
    height: 20px;
  }

  .selected {
    background: #cfe9db;
  }

  .selected::after {
    position: absolute;
    inset: 0 -6px -6px -10px;
    z-index: 1;
    border: 2px solid #000;
    content: '';
  }

  .stroke {
    fill: none;
    stroke: #666;
  }

  .thick {
    stroke: #555;
  }

  .dash {
    stroke-dasharray: 1 1;
  }

  .solid {
    fill: #555;
  }

  text {
    fill: #444;
    font-size: 6px;
    font-weight: 700;
    text-anchor: middle;
  }

  .letter {
    fill: #2f6fb0;
    font-size: 8px;
  }

  .grip {
    margin: 2px 5px 0 auto;
  }
</style>
